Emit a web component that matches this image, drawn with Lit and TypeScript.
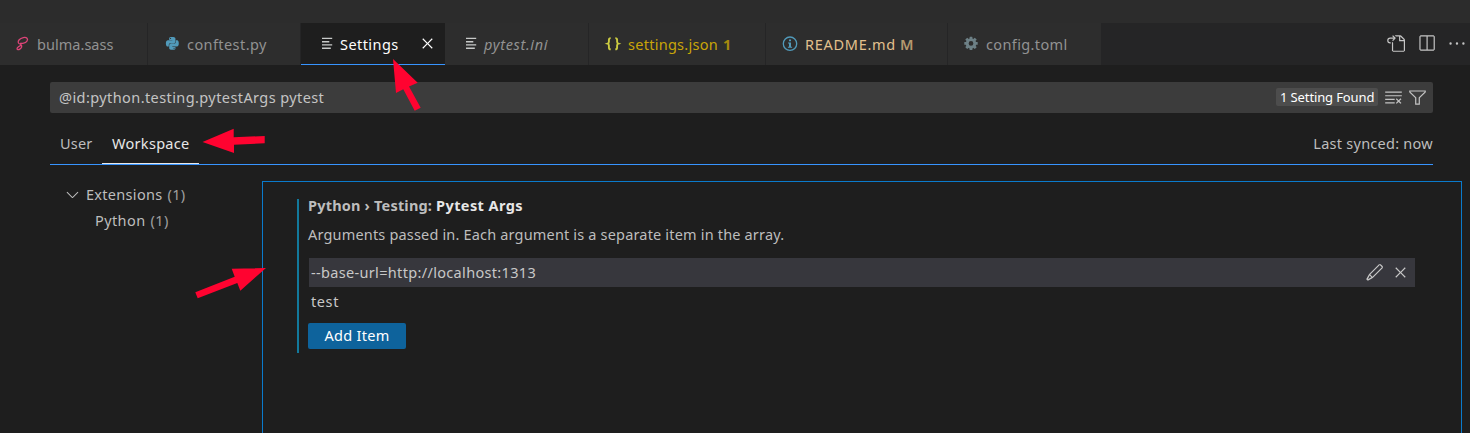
import { LitElement, html, svg, css } from "lit";
import { customElement, property } from "lit/decorators.js";

const codicons: Record<string, string> = {
  close: "M8 8.707l3.646 3.647.708-.707L8.707 8l3.647-3.646-.707-.708L8 7.293 4.354 3.646l-.707.708L7.293 8l-3.646 3.646.707.708L8 8.707z",
  chevron: "M7.976 10.072l4.357-4.357.62.618L8.284 11h-.618L3 6.333l.619-.618 4.357 4.357z",
  split: "M14 1H3L2 2v11l1 1h11l1-1V2l-1-1zM8 13H3V2h5v11zm6 0H9V2h5v11z",
  edit: "M13.23 1h-1.46L3.52 9.25l-.16.22L1 13.59 2.41 15l4.12-2.36.22-.16L15 4.23V2.77L13.23 1zM2.41 13.59l1.51-3 1.45 1.45-2.96 1.55zm3.83-2.06L4.47 9.76l8-8 1.77 1.77-8 8z",
  filter: "M15 2v1.67l-5 4.759V14H6V8.429l-5-4.76V2h14zM7 8v5h2V8l5-4.76V3H2v.24L7 8z",
  clear: "M10 12.6l.7.7 1.6-1.6 1.6 1.6.8-.7L13 11l1.7-1.6-.8-.8-1.6 1.7-1.6-1.7-.7.8 1.6 1.6-1.6 1.6zM1 4h14V3H1v1zm0 3h14V6H1v1zm8 2.5V9H1v1h8v-.5zM9 13v-1H1v1h8z",
  goto: "M6 5.914l2.06-2.06v-.708L5.915 1l-.707.707.043.043.25.25 1 1h-3a2.5 2.5 0 0 0 0 5H4V7h-.5a1.5 1.5 0 1 1 0-3h3L5.207 5.293 5.914 6 6 5.914zM11 2H8.328l-1-1H12l.71.29 3 3L16 5v9l-1 1H6l-1-1V6.5l1 .847V14h9V6h-4V2zm1 0v3h3l-3-3z",
  more: "M4 8a1 1 0 1 1-2 0 1 1 0 0 1 2 0zm5.4 0a1 1 0 1 1-2 0 1 1 0 0 1 2 0zm5.4 0a1 1 0 1 1-2 0 1 1 0 0 1 2 0z",
};

@customElement("code-icon")
class CodeIcon extends LitElement {
  @property() name = "";
  static styles = css`
    :host { display: block; width: 19px; height: 19px; flex: none; }
    svg { display: block; width: 19px; height: 19px; fill: currentColor; }
  `;
  render() {
    return html`<svg viewBox="0 0 16 16"><path fill-rule="evenodd" d=${codicons[this.name]} /></svg>`;
  }
}

const teeth = [0, 45, 90, 135, 180, 225, 270, 315];
const fileIcons: Record<string, unknown> = {
  sass: svg`<path class="line" d="M4.6 7.9C3 7.2 2.6 5.6 4.2 3.8 6.2 1.6 10.5.7 12 2.2c1.5 1.6-.5 4.3-3.4 5-1.6.4-2.9.2-3.1-.4M4.8 7.6c1.4.9 2.4 1.6 1.9 3.3-.6 1.9-3 3.3-4.2 2.6-1.2-.8.1-2.7 3.4-4.2"/>`,
  python: svg`<path transform="translate(.9 1) scale(.535)" d="M14.25.18l.9.2.73.26.59.3.45.32.34.34.25.34.16.33.1.3.04.26.02.2-.01.13V8.5l-.05.63-.13.55-.21.46-.26.38-.3.31-.33.25-.35.19-.35.14-.33.1-.3.07-.26.04-.21.02H8.77l-.69.05-.59.14-.5.22-.41.27-.33.32-.27.35-.2.36-.15.37-.1.35-.07.32-.04.27-.02.21v3.06H3.17l-.21-.03-.28-.07-.32-.12-.35-.18-.36-.26-.36-.36-.35-.46-.32-.59-.28-.73-.21-.88-.14-1.05-.05-1.23.06-1.22.16-1.04.24-.87.32-.71.36-.57.4-.44.42-.33.42-.24.4-.16.36-.1.32-.05.24-.01h.16l.06.01h8.16v-.83H6.18l-.01-2.75-.02-.37.05-.34.11-.31.17-.28.25-.26.31-.23.38-.2.44-.18.51-.15.58-.12.64-.1.71-.06.77-.04.84-.02 1.27.05zm-6.3 1.98l-.23.33-.08.41.08.41.23.34.33.22.41.09.41-.09.33-.22.23-.34.08-.41-.08-.41-.23-.33-.33-.22-.41-.09-.41.09zm13.09 3.95l.28.06.32.12.35.18.36.27.36.35.35.47.32.59.28.73.21.88.14 1.04.05 1.23-.06 1.23-.16 1.04-.24.86-.32.71-.36.57-.4.45-.42.33-.42.24-.4.16-.36.09-.32.05-.24.02-.16-.01h-8.22v.82h5.84l.01 2.76.02.36-.05.34-.11.31-.17.29-.25.25-.31.24-.38.2-.44.17-.51.15-.58.13-.64.09-.71.07-.77.04-.84.01-1.27-.04-1.07-.14-.9-.2-.73-.25-.59-.3-.45-.33-.34-.34-.25-.34-.16-.33-.1-.3-.04-.25-.02-.2.01-.13v-5.34l.05-.64.13-.54.21-.46.26-.38.3-.32.33-.24.35-.2.35-.14.33-.1.3-.06.26-.04.21-.02.13-.01h5.84l.69-.05.59-.14.5-.21.41-.28.33-.32.27-.35.2-.36.15-.36.1-.35.07-.32.04-.28.02-.21V6.07h2.09l.14.01zm-6.47 14.25l-.23.33-.08.41.08.41.23.33.33.23.41.08.41-.08.33-.23.23-.33.08-.41-.08-.41-.23-.33-.33-.23-.41-.08-.41.08z"/>`,
  lines: svg`<path d="M2 1.8h10.2v1.3H2zM2 5.1h7.3v1.3H2zM2 8.3h10.2v1.3H2zM2 11.6h8.8v1.3H2z"/>`,
  braces: svg`<path class="brace" d="M5.7 2.1C4.1 2.1 3.9 2.8 3.9 4v1.8c0 1.1-.4 1.6-1.3 1.9.9.3 1.3.8 1.3 1.9v1.8c0 1.2.2 1.9 1.8 1.9M10.3 2.1c1.6 0 1.8.7 1.8 1.9v1.8c0 1.1.4 1.6 1.3 1.9-.9.3-1.3.8-1.3 1.9v1.8c0 1.2-.2 1.9-1.8 1.9"/>`,
  info: svg`<circle class="line" cx="8" cy="7.7" r="6.7"/><path d="M7 3.6h2v1.7H7zM6 6.5h3v4.3h1.1v1H5.9v-1H7V7.5H6z"/>`,
  gear: svg`<circle cx="8" cy="7.4" r="3.8" fill="none" stroke="currentColor" stroke-width="2.9"/>${teeth.map(
    (a) => svg`<rect x="6.6" y=".7" width="2.8" height="2.4" rx=".4" transform="rotate(${a} 8 7.4)"/>`,
  )}`,
};

@customElement("file-icon")
class FileIcon extends LitElement {
  @property() name = "";
  static styles = css`
    :host { display: block; width: 16px; height: 16px; flex: none; }
    svg { display: block; width: 16px; height: 16px; fill: currentColor; overflow: visible; }
    .line { fill: none; stroke: currentColor; stroke-width: 1.3; }
    .brace { fill: none; stroke: currentColor; stroke-width: 1.9; }
  `;
  render() {
    return html`<svg viewBox="0 0 16 16">${fileIcons[this.name]}</svg>`;
  }
}

const tabs = [
  { id: "bulma", icon: "sass", label: "bulma.sass" },
  { id: "conftest", icon: "python", label: "conftest.py" },
  { id: "settings", icon: "lines", label: "Settings", active: true },
  { id: "pytest", icon: "lines", label: "pytest.ini" },
  { id: "json", icon: "braces", label: "settings.json", badge: "1" },
  { id: "readme", icon: "info", label: "README.md", badge: "M" },
  { id: "toml", icon: "gear", label: "config.toml" },
];

@customElement("app-root")
class AppRoot extends LitElement {
  static styles = css`
    :host {
      display: flex; flex-direction: column; position: relative;
      height: 433px; overflow: hidden; box-sizing: border-box;
      background: #1e1e1e; color: #bdbdbd;
      font: 14.5px/20px "Noto Sans", "Open Sans", sans-serif;
      letter-spacing: .35px; white-space: nowrap;
    }
    .titlebar { height: 23px; flex: none; background: #2c2c2c; }
    .tabbar { height: 42px; flex: none; display: flex; background: #252526; }
    .tab {
      display: flex; align-items: center; box-sizing: border-box; height: 42px;
      padding-left: 14px; border-right: 1px solid #252526;
      background: #2d2d2d; color: #929292;
    }
    .tab file-icon { margin: 0 7px 1px 0; }
    .bulma { width: 148px; letter-spacing: .03px; }
    .bulma file-icon { margin: 0 6px 1px 1px; color: #dd4478; }
    .conftest { width: 153px; padding-left: 17px; letter-spacing: .42px; }
    .conftest file-icon { margin-right: 6px; }
    .settings {
      width: 144px; padding-left: 19px; letter-spacing: .44px; color: #fff;
      background: #1e1e1e; border-right: 0; border-bottom: 1px solid #3794ff;
      padding-top: 1px;
    }
    .settings file-icon, .pytest file-icon { color: #c8cac9; margin-right: 4px; }
    .settings code-icon { margin-left: 19px; margin-bottom: 2px; }
    .pytest { width: 144px; letter-spacing: .65px; padding-left: 19px; }
    .pytest .label { font-style: italic; }
    .json { width: 177px; padding-left: 16px; letter-spacing: .27px; color: #c9a508; }
    .json .badge { color: #a68a0d; margin-left: 5px; }
    .readme { width: 182px; padding-left: 16px; letter-spacing: .72px; color: #e2c08d; }
    .readme .badge { color: #b6996f; margin-left: 4px; }
    .toml { width: 154px; padding-left: 15px; letter-spacing: .37px; }
    .badge { font-weight: 700; letter-spacing: 0; }
    .readme .badge { font-weight: 600; }
    .conftest file-icon, .readme file-icon { color: #519aba; }
    .json file-icon { color: #cbcb41; }
    .toml file-icon { color: #6d8086; }
    .actions { display: flex; align-items: center; margin-left: auto; padding: 0 4px 1px 0; gap: 12px; color: #c5c5c5; }
    .actions code-icon:last-child { margin-left: -1px; }

    .content { flex: 1; min-height: 0; display: flex; flex-direction: column; padding: 17px 8px 0 50px; }
    .search {
      display: flex; align-items: center; height: 31px; flex: none; margin-right: 29px;
      box-sizing: border-box; padding: 0 6px 1px 9px; border-radius: 2px;
      background: #3c3c3c; color: #c4c4c4; letter-spacing: .41px;
    }
    .count {
      box-sizing: border-box; width: 102px;
      margin: 0 6px 1px auto; height: 18px; padding: 0 4px; border-radius: 2px;
      background: #4d4d4d; color: #fff; font-size: 13px; line-height: 18px; letter-spacing: -.12px;
    }
    .search code-icon { margin-top: 1px; }
    .search code-icon + code-icon { margin-left: 5px; }
    .scopes {
      display: flex; height: 41px; margin: 11px 29px 0 0; flex: none; box-sizing: border-box;
      border-bottom: 1px solid #3794ff; line-height: 39px;
    }
    .scope { padding: 0 10px; letter-spacing: .2px; width: 32px; }
    .scope.on { color: #e7e7e7; border-bottom: 1px solid #e7e7e7; letter-spacing: .3px; box-sizing: border-box; width: 97px; }
    .synced { margin-left: auto; letter-spacing: .26px; }

    .body { display: flex; flex: 1; min-height: 0; margin-top: 16px; }
    .tree { width: 212px; flex: none; }
    .node { display: flex; align-items: center; height: 26px; letter-spacing: .3px; }
    .node code-icon { margin: 0 4px 0 13px; }
    .node .n { color: #a0a0a0; margin-left: 5px; }
    .node.child { padding-left: 45px; letter-spacing: .4px; }
    .panel { flex: 1; border: 1px solid #0a7acb; border-bottom: 0; padding: 17px 46px 0 34px; }
    .setting { height: 154px; border-left: 2px solid #12799c; padding-left: 9px; box-sizing: border-box; display: flex; flex-direction: column; }
    .title { height: 13px; line-height: 12px; font-weight: 700; letter-spacing: .19px; }
    .title b { color: #e7e7e7; font-weight: 700; letter-spacing: .4px; }
    .desc { margin-top: 12px; letter-spacing: .175px; }
    .item { display: flex; align-items: center; height: 29px; margin-left: 1px; padding: 0 5px 0 2px; color: #c8c8c8; letter-spacing: .33px; }
    .item.sel { margin-top: 14px; background: #37373d; }
    .item span { margin-bottom: 2px; }
    .item .grow { flex: 1; }
    .item code-icon + code-icon { margin-left: 7px; }
    .item.test { letter-spacing: .6px; }
    .add {
      width: 98px; height: 26px; margin-top: 7px; border-radius: 2px; text-align: center;
      background: #0e639c; color: #fff; line-height: 24px; letter-spacing: .28px;
    }
    .arrows { position: absolute; inset: 0; width: 1470px; height: 433px; fill: #ff0330; pointer-events: none; }
  `;

  render() {
    return html`
      <div class="titlebar"></div>
      <div class="tabbar">
        ${tabs.map(
          (t) => html`<div class="tab ${t.id}"><file-icon name=${t.icon}></file-icon><span class="label">${t.label}</span>${t.badge
            ? html`<span class="badge">${t.badge}</span>`
            : ""}${t.active ? html`<code-icon name="close"></code-icon>` : ""}</div>`,
        )}
        <div class="actions"><code-icon name="goto"></code-icon><code-icon name="split"></code-icon><code-icon name="more"></code-icon></div>
      </div>
      <div class="content">
        <div class="search"><span>@id:python.testing.pytestArgs pytest</span><span class="count">1 Setting Found</span><code-icon name="clear"></code-icon><code-icon name="filter"></code-icon></div>
        <div class="scopes"><span class="scope">User</span><span class="scope on">Workspace</span><span class="synced">Last synced: now</span></div>
        <div class="body">
          <div class="tree">
            <div class="node"><code-icon name="chevron"></code-icon><span>Extensions</span><span class="n">(1)</span></div>
            <div class="node child"><span>Python</span><span class="n">(1)</span></div>
          </div>
          <div class="panel">
            <div class="setting">
              <div class="title">Python › Testing: <b>Pytest Args</b></div>
              <div class="desc">Arguments passed in. Each argument is a separate item in the array.</div>
              <div class="item sel"><span class="grow">--base-url=http://localhost:1313</span><code-icon name="edit"></code-icon><code-icon name="close"></code-icon></div>
              <div class="item test"><span>test</span></div>
              <div class="add">Add Item</div>
            </div>
          </div>
        </div>
      </div>
      <svg class="arrows" viewBox="0 0 1470 433">
        <path d="M393 59L417.7 82.7 409 86.5 420.7 107.7 414.7 110.7 403.3 89.3 396 93z" />
        <path d="M202.5 142L233.7 128.7V137.3L264.7 136V143.3L234 144.7V153z" />
        <path d="M266 268L231.7 268.7 234.7 276.7 195.3 292.3 197.7 298.3 237.3 283 240.3 290.7z" />
      </svg>
    `;
  }
}
